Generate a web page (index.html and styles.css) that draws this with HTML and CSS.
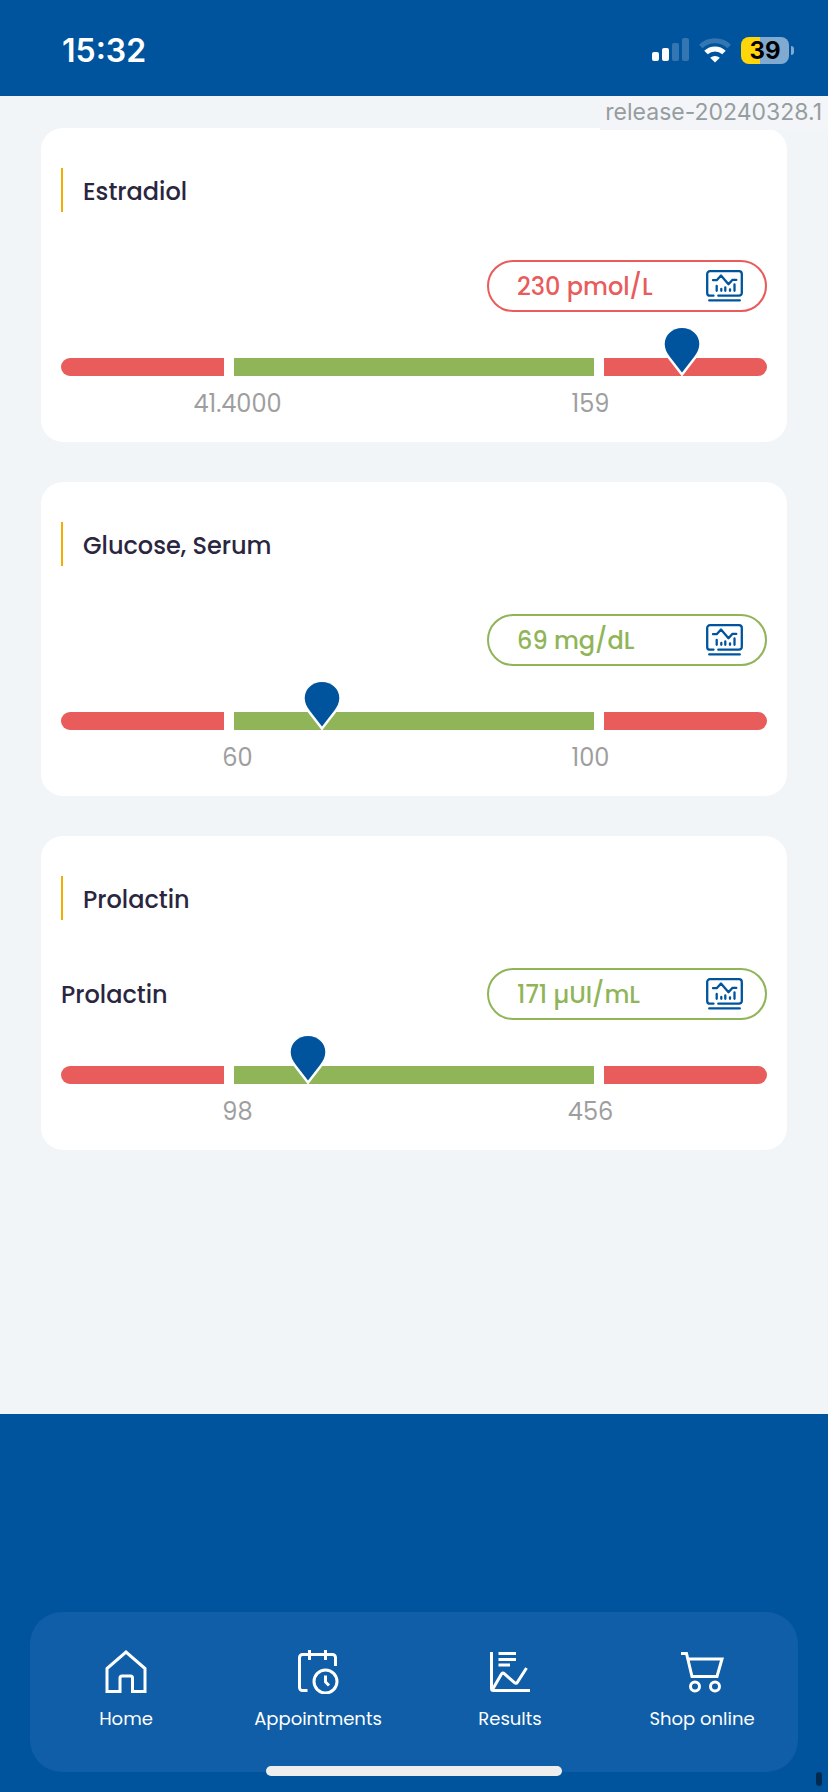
FILE: index.html
```
<!DOCTYPE html>
<html lang="en">
<head>
    <meta charset="UTF-8">
    <meta name="viewport" content="width=device-width, initial-scale=1.0">
    <title>Results</title>
    <link rel="stylesheet" href="styles.css">
</head>
<body>
    <svg class="symbols" aria-hidden="true">
        <symbol id="chart" viewBox="0 0 37 32">
            <g fill="none" stroke="currentColor" stroke-width="2.3" stroke-linecap="round" stroke-linejoin="round">
                <path d="M7.500 25.700H4a2.800 2.800 0 0 1-2.800-2.800V4A2.800 2.800 0 0 1 4 1.200h29A2.800 2.800 0 0 1 35.800 4v18.900a2.800 2.800 0 0 1-2.800 2.800H12.300"/>
                <path d="M3.200 30.400h30.600"/>
                <path d="M7 10.200h3.700L15 5.500l7.500 8.700 3.800-4.300h4"/>
                <path d="M10.700 16v4.800M15.300 19v1.800M19.300 17.300v3.500M24 19.300v1.500M28.500 14.500v6.300"/>
            </g>
        </symbol>
        <symbol id="pin" viewBox="0 0 40 50">
            <path d="M20 2C10.200 2 2.700 9.300 2.700 18c0 5 2.300 9 5.300 13L20 46.500 32 31c3-4 5.300-8 5.300-13C37.300 9.300 29.800 2 20 2z" fill="#00549e" stroke="#fff" stroke-width="5" paint-order="stroke"/>
        </symbol>
    </svg>

    <header class="status-bar">
        <time class="clock">15:32</time>
        <div class="status-icons">
            <svg width="37" height="24" viewBox="0 0 37 24" fill="#fff" aria-hidden="true">
                <rect x="0" y="14" width="7" height="9" rx="2"/>
                <rect x="10" y="10" width="7" height="13" rx="2"/>
                <rect x="20" y="5" width="7" height="18" rx="2" opacity=".2"/>
                <rect x="30" y="0" width="7" height="23" rx="2" opacity=".2"/>
            </svg>
            <svg width="32" height="25" viewBox="0 0 32 25" fill="none" stroke="#fff" stroke-width="5" aria-hidden="true">
                <path d="M1.800 8.500a20.500 20.500 0 0 1 28.400 0" opacity=".2"/>
                <path d="M7 14.500a13 13 0 0 1 18 0"/>
                <path d="M16 24.500l-4.800-4.700a7 7 0 0 1 9.600 0z" fill="#fff" stroke="none"/>
            </svg>
            <div class="battery"><span class="battery-level">39</span></div>
        </div>
    </header>

    <div class="release">release-20240328.1</div>

    <main class="results">
        <section class="card">
            <h2 class="card-title">Estradiol</h2>
            <div class="card-row">
                <span class="test-name"></span>
                <button class="value high" type="button">230 pmol/L <svg class="chart-icon"><use href="#chart"/></svg></button>
            </div>
            <div class="range">
                <span class="out"></span><span class="normal"></span><span class="out"></span>
                <svg class="pin" style="left: 88%"><use href="#pin"/></svg>
            </div>
            <div class="limits"><span>41.4000</span><span>159</span></div>
        </section>

        <section class="card">
            <h2 class="card-title">Glucose, Serum</h2>
            <div class="card-row">
                <span class="test-name"></span>
                <button class="value" type="button">69 mg/dL <svg class="chart-icon"><use href="#chart"/></svg></button>
            </div>
            <div class="range">
                <span class="out"></span><span class="normal"></span><span class="out"></span>
                <svg class="pin" style="left: 37%"><use href="#pin"/></svg>
            </div>
            <div class="limits"><span>60</span><span>100</span></div>
        </section>

        <section class="card">
            <h2 class="card-title">Prolactin</h2>
            <div class="card-row">
                <span class="test-name">Prolactin</span>
                <button class="value" type="button">171 µUI/mL <svg class="chart-icon"><use href="#chart"/></svg></button>
            </div>
            <div class="range">
                <span class="out"></span><span class="normal"></span><span class="out"></span>
                <svg class="pin" style="left: 35%"><use href="#pin"/></svg>
            </div>
            <div class="limits"><span>98</span><span>456</span></div>
        </section>
    </main>

    <footer class="footer">
        <nav class="tabs">
            <a class="tab" href="#home">
                <svg class="tab-icon" viewBox="0 0 44 44">
                    <path d="M3 41.500V18.500L22 2l19 16.500v23H28.500V28a2 2 0 0 0-2-2H18a2 2 0 0 0-2 2v13.500z"/>
                </svg>
                Home
            </a>
            <a class="tab" href="#appointments">
                <svg class="tab-icon" viewBox="0 0 44 44">
                    <path d="M11.500 40.500h-5a3 3 0 0 1-3-3v-30a3 3 0 0 1 3-3h30a3 3 0 0 1 3 3V16M13.500 0v10M29.500 0v10"/>
                    <circle cx="29.500" cy="31.500" r="11.500"/>
                    <path d="M29.500 25.500v6.500l3.500 3.500"/>
                </svg>
                Appointments
            </a>
            <a class="tab" href="#results">
                <svg class="tab-icon" viewBox="0 0 44 44">
                    <path d="M3.500 2v36.500a2 2 0 0 0 2 2H42M10.500 3.500H28M10.500 9.500H28M10.500 15H22"/>
                    <path d="M4.500 39.500l9-15.500c.8-1.300 1.700-1.300 2.700-.4l10.300 9c1 .9 2 .9 2.800-.3L38.500 18"/>
                </svg>
                Results
            </a>
            <a class="tab" href="#shop">
                <svg class="tab-icon" viewBox="0 0 44 44">
                    <path d="M1 3.500h5.500L12 26.500h25l5-17.500H8"/>
                    <circle cx="15" cy="36.500" r="4.500"/>
                    <circle cx="35" cy="36.500" r="4.500"/>
                </svg>
                Shop online
            </a>
        </nav>
        <div class="home-indicator"></div>
        <div class="scroll-thumb"></div>
    </footer>
</body>
</html>
```

FILE: styles.css
```
* {
    margin: 0;
    padding: 0;
    box-sizing: border-box;
}

body {
    display: flex;
    flex-direction: column;
    position: relative;
    min-height: 100vh;
    background: #f1f5f8;
    color: #2a2640;
    font-family: Poppins, Inter, sans-serif;
    font-size: 24px;
}

.symbols {
    position: absolute;
    width: 0;
    height: 0;
}

/* Status bar */
.status-bar {
    display: flex;
    justify-content: space-between;
    align-items: center;
    height: 96px;
    padding: 4px 34px 0 62px;
    background: #00549e;
    color: #ffffff;
}

.clock {
    font-family: Inter, sans-serif;
    font-size: 32px;
    font-weight: 600;
}

.status-icons {
    display: flex;
    align-items: center;
    gap: 10px;
}

.battery {
    position: relative;
    width: 48px;
    height: 27px;
    margin-right: 5px;
    border-radius: 8px;
    background: linear-gradient(to right, #ffd60a 39%, #80aacf 39%);
    color: #000000;
    font-family: Inter, sans-serif;
    font-size: 24px;
    font-weight: 700;
    line-height: 27px;
    text-align: center;
}

.battery::after {
    content: "";
    position: absolute;
    top: 9px;
    right: -5px;
    width: 3px;
    height: 9px;
    border-radius: 0 4px 4px 0;
    background: #80aacf;
}

.release {
    position: absolute;
    top: 96px;
    right: 0;
    padding: 0 6px 2px 5px;
    background: #f3f5f9;
    color: #969d9f;
    font-family: Inter, sans-serif;
    font-size: 23px;
    line-height: 32px;
}

/* Result cards */
.results {
    display: flex;
    flex: 1;
    flex-direction: column;
    gap: 40px;
    padding: 32px 41px;
}

.card {
    padding: 40px 20px 20px;
    border-radius: 22px;
    background: #ffffff;
}

.card-title {
    padding: 4px 0 0 20px;
    border-left: 2px solid #f3ac00;
    font-size: 24px;
    font-weight: 500;
    line-height: 40px;
}

.card-row {
    display: flex;
    justify-content: space-between;
    align-items: center;
    margin-top: 48px;
}

.test-name {
    font-weight: 500;
}

.value {
    display: flex;
    justify-content: space-between;
    align-items: center;
    width: 280px;
    height: 52px;
    padding: 0 22px 0 28px;
    border: 2px solid currentColor;
    border-radius: 26px;
    background: #ffffff;
    color: #90b559;
    font: inherit;
    font-weight: 500;
    cursor: pointer;
}

.value.high {
    color: #e85c5c;
}

.chart-icon {
    width: 37px;
    height: 32px;
    color: #00549e;
}

.range {
    display: flex;
    gap: 10px;
    position: relative;
    height: 18px;
    margin-top: 46px;
}

.out {
    flex: 163;
    background: #e85c5c;
}

.out:first-child {
    border-radius: 9px 0 0 9px;
}

.out:nth-child(3) {
    border-radius: 0 9px 9px 0;
}

.normal {
    flex: 360;
    background: #90b559;
}

.pin {
    position: absolute;
    bottom: 0;
    width: 40px;
    height: 50px;
    transform: translateX(-50%);
}

.limits {
    display: flex;
    margin-top: 10px;
    color: #9e9e9e;
    line-height: 36px;
    text-align: center;
}

.limits span {
    flex: 1;
}

/* Bottom navigation */
.footer {
    position: relative;
    padding: 198px 30px 20px;
    background: #00549e;
}

.tabs {
    display: flex;
    height: 160px;
    padding-top: 38px;
    border-radius: 32px;
    background: #0f5ea7;
}

.tab {
    display: flex;
    flex: 1;
    flex-direction: column;
    align-items: center;
    gap: 11px;
    color: #ffffff;
    font-size: 18px;
    line-height: 28px;
    text-decoration: none;
}

.tab-icon {
    width: 44px;
    height: 44px;
    fill: none;
    stroke: #ffffff;
    stroke-width: 3;
}

.home-indicator {
    position: absolute;
    bottom: 16px;
    left: 50%;
    width: 296px;
    height: 10px;
    border-radius: 5px;
    background: #eeeeee;
    transform: translateX(-50%);
}

.scroll-thumb {
    position: absolute;
    right: 6px;
    bottom: 6px;
    width: 6px;
    height: 14px;
    border-radius: 3px;
    background: #002b50;
}
```
